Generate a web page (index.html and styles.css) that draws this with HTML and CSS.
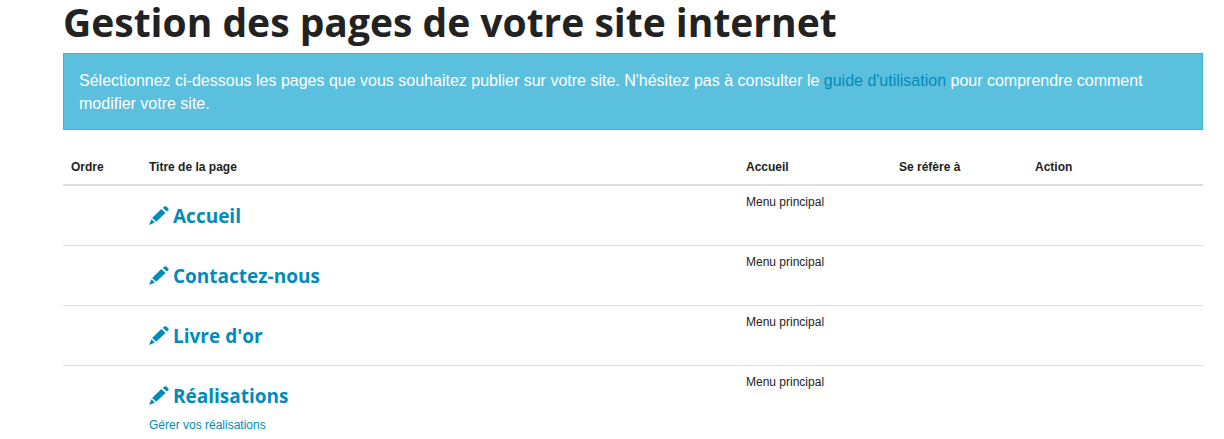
FILE: index.html
```
<!DOCTYPE html>
<html lang="fr">
<head>
  <meta charset="UTF-8">
  <title>Gestion des pages</title>
  <link rel="stylesheet" href="styles.css">
</head>
<body>
  <svg class="sprite" aria-hidden="true">
    <symbol id="pencil" viewBox="0 0 20 19">
      <path d="M13.8 1.9 15.3.5Q16.3-.2 17.3.6L19.2 2.3Q20.1 3.2 19.3 4.2L18 5.5ZM12.3 3 16.5 6.9 7.2 15.8 3.1 12ZM2.3 13.2 5.9 16.6.1 18.9Z"/>
    </symbol>
  </svg>

  <main class="container">
    <h1>Gestion des pages de votre site internet</h1>

    <div class="alert">
      Sélectionnez ci-dessous les pages que vous souhaitez publier sur votre site. N'hésitez pas à consulter le <a href="#guide">guide d'utilisation</a> pour comprendre comment modifier votre site.
    </div>

    <table class="pages">
      <thead>
        <tr>
          <th class="col-order">Ordre</th>
          <th>Titre de la page</th>
          <th class="col-menu">Accueil</th>
          <th class="col-ref">Se réfère à</th>
          <th class="col-action">Action</th>
        </tr>
      </thead>
      <tbody>
        <tr>
          <td></td>
          <td><h4><a href="#accueil"><svg class="icon" aria-hidden="true"><use href="#pencil"/></svg>Accueil</a></h4></td>
          <td>Menu principal</td>
          <td></td>
          <td></td>
        </tr>
        <tr>
          <td></td>
          <td><h4><a href="#contact"><svg class="icon" aria-hidden="true"><use href="#pencil"/></svg>Contactez-nous</a></h4></td>
          <td>Menu principal</td>
          <td></td>
          <td></td>
        </tr>
        <tr>
          <td></td>
          <td><h4><a href="#livre-dor"><svg class="icon" aria-hidden="true"><use href="#pencil"/></svg>Livre d'or</a></h4></td>
          <td>Menu principal</td>
          <td></td>
          <td></td>
        </tr>
        <tr>
          <td></td>
          <td>
            <h4><a href="#realisations"><svg class="icon" aria-hidden="true"><use href="#pencil"/></svg>Réalisations</a></h4>
            <a href="#gerer">Gérer vos réalisations</a>
          </td>
          <td>Menu principal</td>
          <td></td>
          <td></td>
        </tr>
      </tbody>
    </table>
  </main>
</body>
</html>
```
FILE: styles.css
```
* {
  box-sizing: border-box;
}
body {
  margin: 0;
  font-family: "Liberation Sans", Arial, sans-serif;
  font-size: 12px;
  line-height: 17px;
  color: #222;
  background: #fff;
}
a {
  color: #008cba;
  text-decoration: none;
}
a:hover {
  text-decoration: underline;
}
h1, h4 {
  font-family: "Open Sans", sans-serif;
  font-weight: bold;
}
h1 {
  margin: 0 0 9px;
  font-size: 39px;
  line-height: 44px;
}
h4 {
  margin: 8px 0 7px;
  font-size: 19px;
  line-height: 28px;
}
h4 a {
  display: flex;
  align-items: center;
  gap: 4px;
}
.sprite {
  display: none;
}
.icon {
  width: 20px;
  height: 19px;
  margin-bottom: 2px;
  fill: currentColor;
}
.container {
  padding: 0 21px 0 63px;
}
.alert {
  margin-bottom: 21px;
  padding: 15px 15px 14px;
  border: 1px solid #3db5d8;
  background: #5bc0de;
  color: #fff;
  font-size: 16px;
  line-height: 23px;
}
.pages {
  width: 100%;
  table-layout: fixed;
  border-collapse: separate;
  border-spacing: 0;
}
.pages th,
.pages td {
  padding: 8px;
  text-align: left;
  vertical-align: top;
}
.pages th {
  border-bottom: 2px solid #ddd;
}
.pages tbody tr + tr td {
  border-top: 1px solid #ddd;
}
.col-order {
  width: 78px;
}
.col-menu {
  width: 153px;
}
.col-ref {
  width: 136px;
}
.col-action {
  width: 176px;
}
```
